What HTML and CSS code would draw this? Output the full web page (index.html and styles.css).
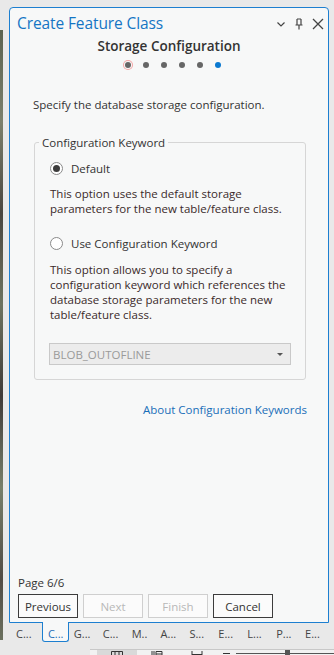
FILE: index.html
```html
<!DOCTYPE html>
<html lang="en">
<head>
    <meta charset="UTF-8">
    <title>Create Feature Class</title>
    <link rel="stylesheet" href="styles.css">
</head>
<body>

    <div class="app">
        <div class="map-strip"></div>

        <div class="dock">
            <div class="panel">
                <div class="title-bar">
                    <span class="title">Create Feature Class</span>
                    <div class="win-icons">
                        <svg width="10" height="10" viewBox="0 0 10 10"><path d="M1.5 3.5 L5 7 L8.5 3.5" fill="none" stroke="#444" stroke-width="1.2"/></svg>
                        <svg width="10" height="12" viewBox="0 0 10 12"><path d="M3 1 H7 M3 1 V7 M7 1 V7 M1.5 7 H8.5 M5 7 V11.5" fill="none" stroke="#444" stroke-width="1.2"/></svg>
                        <svg width="12" height="12" viewBox="0 0 12 12"><path d="M1 1 L11 11 M11 1 L1 11" fill="none" stroke="#444" stroke-width="1.3"/></svg>
                    </div>
                </div>

                <div class="heading">Storage Configuration</div>
                <div class="steps">
                    <span class="dot current"></span>
                    <span class="dot"></span>
                    <span class="dot"></span>
                    <span class="dot"></span>
                    <span class="dot"></span>
                    <span class="dot active"></span>
                </div>

                <div class="content">
                    <p class="intro">Specify the database storage configuration.</p>

                    <fieldset class="group">
                        <legend>Configuration Keyword</legend>

                        <label class="radio-row">
                            <span class="radio checked"></span>
                            Default
                        </label>
                        <p class="desc first">This option uses the default storage<br>parameters for the new table/feature class.</p>

                        <label class="radio-row second">
                            <span class="radio"></span>
                            Use Configuration Keyword
                        </label>
                        <p class="desc">This option allows you to specify a<br>configuration keyword which references the<br>database storage parameters for the new<br>table/feature class.</p>

                        <div class="combo">
                            <span>BLOB_OUTOFLINE</span>
                            <span class="caret"></span>
                        </div>
                    </fieldset>

                    <div class="link-row">
                        <a class="link">About Configuration Keywords</a>
                    </div>
                </div>

                <div class="footer">
                    <div class="page-num">Page 6/6</div>
                    <div class="buttons">
                        <button class="btn">Previous</button>
                        <button class="btn" disabled>Next</button>
                        <button class="btn" disabled>Finish</button>
                        <button class="btn">Cancel</button>
                    </div>
                </div>
            </div>

            <div class="tabs">
                <span class="tab">C...</span>
                <span class="tab selected">C...</span>
                <span class="tab">G...</span>
                <span class="tab">C...</span>
                <span class="tab">M..</span>
                <span class="tab">A...</span>
                <span class="tab">S...</span>
                <span class="tab">E...</span>
                <span class="tab">L...</span>
                <span class="tab">P...</span>
                <span class="tab">E...</span>
            </div>
        </div>
    </div>

    <div class="status-bar">
        <div class="view-btn selected">
            <svg width="12" height="8" viewBox="0 0 12 8"><path d="M0.5 0.5 H11.5 V7.5 H0.5 Z M4 0.5 V7.5 M8 0.5 V7.5" fill="none" stroke="#333" stroke-width="1"/></svg>
        </div>
        <div class="view-btn">
            <svg width="12" height="8" viewBox="0 0 12 8"><path d="M1 0 V8 M3 0 V8 M5 0.5 H11 V7.5 H5 Z M5 3 H11 M5 5 H11" fill="none" stroke="#333" stroke-width="1"/></svg>
        </div>
        <div class="view-btn">
            <svg width="12" height="8" viewBox="0 0 12 8"><path d="M1 0 V8 M1 3.5 H11 M6 3.5 V8 M11 0 V8" fill="none" stroke="#333" stroke-width="1"/></svg>
        </div>
        <div class="zoom">
            <span class="minus"></span>
            <span class="slider"><span class="thumb"></span></span>
        </div>
    </div>

</body>
</html>
```

FILE: styles.css
```css
body {
    margin: 0;
    width: 334px;
    height: 655px;
    overflow: hidden;
    background-color: #e9e9e9;
    font-family: 'Open Sans', 'Noto Sans', Arial, sans-serif;
    font-size: 11.5px;
    color: #333;
}

.app {
    display: flex;
    height: 649px;
}

.map-strip {
    width: 3px;
    margin-top: 30px;
    height: 610px;
    background: linear-gradient(180deg, #5b6350 0%, #7c806c 15%, #4a4640 30%, #6e7460 45%, #3f3a38 60%, #78806a 75%, #514b45 90%, #6b705e 100%);
}

.dock {
    margin-left: 6px;
    margin-top: 7px;
    width: 320px;
    display: flex;
    flex-direction: column;
}

.panel {
    box-sizing: border-box;
    height: 616px;
    border: 1px solid #1d7fd0;
    border-radius: 4px 4px 0 0;
    background-color: #f7f8f8;
    display: flex;
    flex-direction: column;
}

.title-bar {
    height: 30px;
    display: flex;
    align-items: center;
    justify-content: space-between;
    padding: 0 4px 0 7px;
}

.title {
    font-size: 15.5px;
    color: #1475c4;
    letter-spacing: -0.1px;
}

.win-icons {
    display: flex;
    align-items: center;
    gap: 8px;
    padding-top: 1px;
}

.heading {
    text-align: center;
    font-size: 13.5px;
    font-weight: 600;
    line-height: 18px;
    margin-top: -1px;
    color: #333;
}

.steps {
    display: flex;
    justify-content: center;
    gap: 12px;
    margin-top: 5px;
    height: 10px;
    align-items: center;
    padding-left: 8px;
}

.dot {
    width: 6px;
    height: 6px;
    border-radius: 50%;
    background: #666;
}

.dot.current {
    box-shadow: 0 0 0 1px #f7f8f8, 0 0 0 2px #f4a4a4;
}

.dot.active {
    background: #0b79d0;
}

.content {
    padding: 0 23px;
}

.intro {
    margin: 27px 0 0;
    line-height: 15px;
}

.group {
    margin: 23px 0 0 1px;
    width: 272px;
    box-sizing: border-box;
    border: 1px solid #d6d6d6;
    border-radius: 3px;
    padding: 0 14px 14px 15px;
}

.group legend {
    padding: 0 3px;
    margin-left: -11px;
    line-height: 15px;
}

.radio-row {
    display: flex;
    align-items: center;
    gap: 8px;
    height: 16px;
    margin-top: 10px;
}

.radio-row.second {
    margin-top: 19px;
}

.radio {
    box-sizing: border-box;
    width: 13px;
    height: 13px;
    border: 1px solid #8a8a8a;
    border-radius: 50%;
    background: #fff;
    display: flex;
    align-items: center;
    justify-content: center;
}

.radio.checked::after {
    content: "";
    width: 7px;
    height: 7px;
    border-radius: 50%;
    background: #3c3c3c;
}

.desc {
    margin: 11px -12px 0 0;
    line-height: 15px;
    color: #3a2a2a;
    white-space: nowrap;
}

.desc.first {
    margin-top: 10px;
}

.combo {
    box-sizing: border-box;
    margin: 21px 0 0 -1px;
    width: 242px;
    height: 22px;
    border: 1px solid #c9c9c9;
    background: #ececec;
    color: #9a9a9a;
    display: flex;
    align-items: center;
    justify-content: space-between;
    padding: 0 7px 0 3px;
}

.caret {
    width: 0;
    height: 0;
    border-left: 3px solid transparent;
    border-right: 3px solid transparent;
    border-top: 3px solid #555;
}

.link-row {
    display: flex;
    justify-content: flex-end;
    margin: 22px -2px 0 0;
    line-height: 15px;
}

.link {
    color: #1a6fb8;
}

.footer {
    margin-top: auto;
    padding: 0 0 4px 8px;
}

.page-num {
    line-height: 15px;
    margin-bottom: 4px;
}

.buttons {
    display: flex;
    gap: 5px;
}

.btn {
    box-sizing: border-box;
    width: 60px;
    height: 24px;
    background: #fbfbfb;
    border: 1px solid #3c3c3c;
    font-family: inherit;
    font-size: 11.5px;
    color: #333;
    padding: 0;
}

.btn:disabled {
    border-color: #cfcfcf;
    color: #b8b8b8;
}

.tabs {
    display: flex;
    gap: 2px;
    padding-left: 4px;
    height: 20px;
}

.tab {
    width: 27px;
    box-sizing: border-box;
    padding: 3px 0 0 3px;
    font-size: 11px;
    color: #444;
}

.tab.selected {
    margin-top: -1px;
    height: 20px;
    padding: 4px 0 0 5px;
    background: #f7f8f8;
    border: 1px solid #1d7fd0;
    border-top: none;
    border-radius: 0 0 3px 3px;
    color: #1d6fb8;
}

.status-bar {
    display: flex;
    align-items: center;
    margin-left: 90px;
    height: 6px;
    border-top: 1px solid #c8c8c8;
    background: #f2f2f2;
}

.view-btn {
    width: 40px;
    height: 6px;
    display: flex;
    justify-content: center;
    overflow: hidden;
}

.view-btn svg {
    margin-top: 1px;
}

.view-btn.selected {
    background: #d9d9d9;
    margin-left: 7px;
}

.zoom {
    display: flex;
    align-items: center;
    margin-left: 6px;
    flex: 1;
}

.minus {
    width: 7px;
    height: 1px;
    background: #333;
}

.slider {
    position: relative;
    flex: 1;
    height: 1px;
    margin-left: 6px;
    background: #555;
}

.thumb {
    position: absolute;
    left: 49px;
    top: -3px;
    width: 5px;
    height: 7px;
    background: #555;
}
```
